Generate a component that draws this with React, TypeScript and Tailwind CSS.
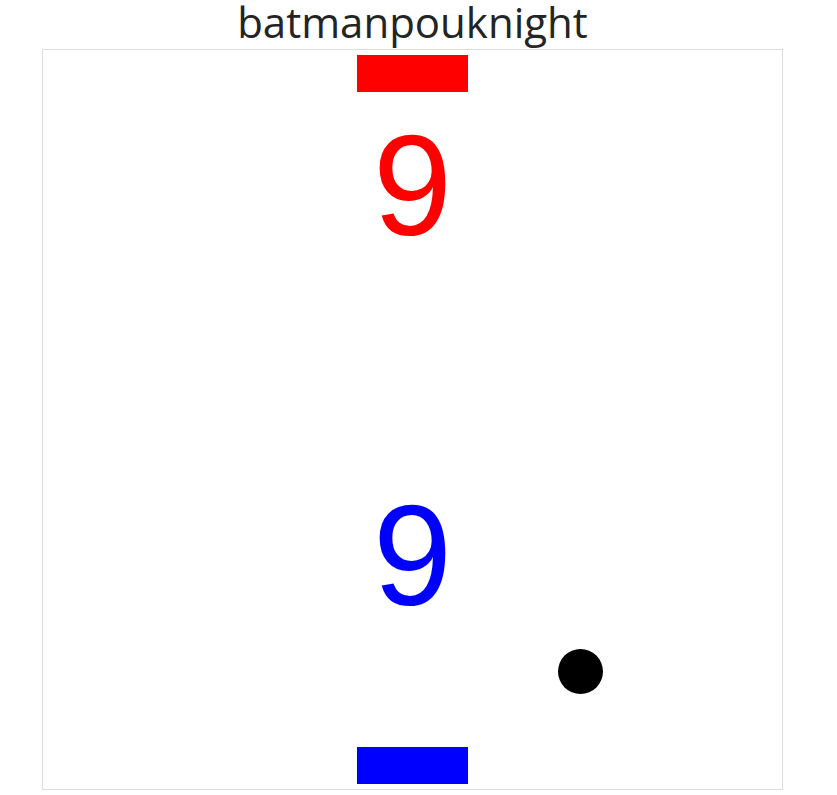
export default function App() {
  return (
    <div className="min-h-screen bg-white flex flex-col items-center pr-[12px]">
      <h1
        className="text-[42px] leading-[44px] text-[#242424] font-normal"
        style={{ fontFamily: '"Open Sans", "Noto Sans", sans-serif' }}
      >
        batmanpouknight
      </h1>
      <div className="relative mt-[5px] w-[741px] h-[741px] border border-[#dddddd] flex flex-col items-center">
        <div className="mt-[5px] w-[111px] h-[37px] bg-[#ff0000]" />
        <div
          className="mt-[23px] text-[142px] leading-none text-[#ff0000]"
          style={{ fontFamily: '"Liberation Sans", Arial, sans-serif' }}
        >
          9
        </div>
        <div
          className="mt-[228px] text-[142px] leading-none text-[#0000ff]"
          style={{ fontFamily: '"Liberation Sans", Arial, sans-serif' }}
        >
          9
        </div>
        <div className="mt-auto mb-[5px] w-[111px] h-[37px] bg-[#0000ff]" />
        <div className="absolute left-[515px] top-[599px] w-[45px] h-[45px] rounded-full bg-black" />
      </div>
    </div>
  );
}
